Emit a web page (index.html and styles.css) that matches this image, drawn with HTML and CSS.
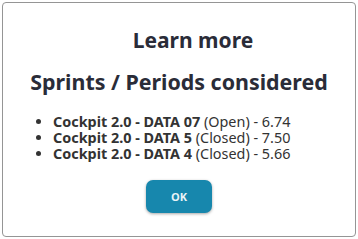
FILE: index.html
```html
<!DOCTYPE html>
<html>
<head>
<meta charset="utf-8">
<link rel="stylesheet" href="styles.css">
</head>
<body>
<div class="dialog">
  <h2 class="title">Learn more</h2>
  <h3 class="subtitle">Sprints / Periods considered</h3>
  <ul class="list">
    <li><b>Cockpit 2.0 - DATA 07</b> (Open) - 6.74</li>
    <li><b>Cockpit 2.0 - DATA 5</b> (Closed) - 7.50</li>
    <li><b>Cockpit 2.0 - DATA 4</b> (Closed) - 5.66</li>
  </ul>
  <div class="actions">
    <button class="ok">OK</button>
  </div>
</div>
</body>
</html>
```
FILE: styles.css
```css
html, body {
  margin: 0;
  padding: 0;
  background: #ffffff;
  width: 358px;
  height: 239px;
  overflow: hidden;
}
body {
  padding: 2px;
  box-sizing: border-box;
  font-family: "Noto Sans", "Open Sans", sans-serif;
}
.dialog {
  box-sizing: border-box;
  width: 354px;
  height: 235px;
  border: 1px solid #959595;
  border-radius: 4px;
  background: #fff;
  display: flex;
  flex-direction: column;
  align-items: center;
  padding-top: 23px;
}
.title {
  margin: 0 0 0 28px;
  font-size: 21px;
  line-height: 28px;
  font-weight: 700;
  color: #2a2c38;
}
.subtitle {
  margin: 13px 0 0 0;
  font-size: 21.4px;
  line-height: 30px;
  font-weight: 700;
  color: #2a2c38;
}
.list {
  align-self: stretch;
  margin: 17px 0 0 0;
  padding: 0 0 0 50px;
  font-size: 14.4px;
  line-height: 16px;
  color: #333;
}
.list b { font-weight: 700; }
.actions {
  margin-top: 18px;
}
.ok {
  width: 66px;
  height: 33px;
  border: none;
  border-radius: 7px;
  background: #1787ad;
  color: #eaf3f7;
  font-family: "Open Sans", sans-serif;
  font-weight: 700;
  font-size: 11px;
  box-shadow: 0 1px 3px rgba(0,0,0,0.35);
}
```
